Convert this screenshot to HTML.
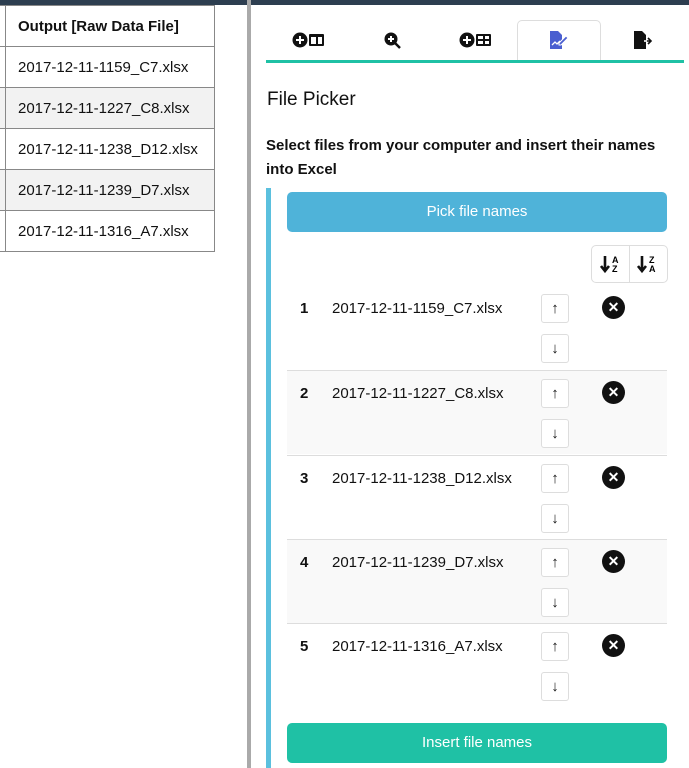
<!DOCTYPE html>
<html><head><meta charset="utf-8"><style>
*{box-sizing:border-box;margin:0;padding:0}
body{width:689px;height:768px;overflow:hidden;background:#fff;font-family:"Liberation Sans",sans-serif;color:#111;position:relative;font-size:15px}
.abs{position:absolute}
.top{left:0;top:0;width:689px;height:5px;background:#2d3e50}
.div{left:247px;top:0;width:4px;height:768px;background:#aaa}
table{position:absolute;left:-1px;top:5px;border-collapse:collapse}
td{border:1px solid #888;height:41px;padding:0 0 0 12px;width:209px;font-size:15px}
td.l{width:6px;padding:0}
tr.g td{background:#f2f2f2}
.tabline{left:266px;top:60px;width:418px;height:3px;background:#1fc1a5}
.tab{top:20px;width:84px;height:41px;border:1px solid #ddd;border-bottom:none;border-radius:5px 5px 0 0;left:517px;background:#fff}
.ic{top:30px}
.btn{left:287px;width:380px;height:40px;border-radius:5px;color:#fff;text-align:center;line-height:40px;font-size:15px}
.row{left:287px;width:380px;height:84px;border-top:1px solid #ddd}
.row .n{position:absolute;left:13px;top:14px;font-weight:bold}
.row .f{position:absolute;left:45px;top:14px}
.sb{position:absolute;left:254px;width:28px;height:29px;border:1px solid #ddd;border-radius:3px;text-align:center;line-height:27px;font-size:15px}
.x{position:absolute;left:315px;top:10px;width:23px;height:23px;border-radius:50%;background:#111;color:#fff;text-align:center;line-height:22px;font-size:14px;font-weight:bold}
</style></head><body>
<div class="abs top"></div>
<div class="abs div"></div>
<table>
<tr><td class="l"></td><td style="font-weight:bold">Output [Raw Data File]</td></tr>
<tr><td class="l"></td><td>2017-12-11-1159_C7.xlsx</td></tr>
<tr class="g"><td class="l"></td><td>2017-12-11-1227_C8.xlsx</td></tr>
<tr><td class="l"></td><td>2017-12-11-1238_D12.xlsx</td></tr>
<tr class="g"><td class="l"></td><td>2017-12-11-1239_D7.xlsx</td></tr>
<tr><td class="l"></td><td>2017-12-11-1316_A7.xlsx</td></tr>
</table>
<div class="abs tab"></div>
<div class="abs tabline"></div>
<svg class="abs ic" style="left:292px" width="34" height="20" viewBox="0 0 34 20"><circle cx="8" cy="10" r="7.5" fill="#111"/><path d="M8 6v8M4 10h8" stroke="#fff" stroke-width="2"/><rect x="17" y="4" width="15" height="12" rx="1" fill="#111"/><rect x="19" y="7" width="5" height="7" fill="#fff"/><rect x="26" y="7" width="4" height="7" fill="#fff"/></svg>
<svg class="abs ic" style="left:383px" width="20" height="20" viewBox="0 0 20 20"><circle cx="8" cy="9" r="6.5" fill="#111"/><path d="M8 6v6M5 9h6" stroke="#fff" stroke-width="2"/><path d="M12 13l5 5" stroke="#111" stroke-width="2.5"/></svg>
<svg class="abs ic" style="left:459px" width="34" height="20" viewBox="0 0 34 20"><circle cx="8" cy="10" r="7.5" fill="#111"/><path d="M8 6v8M4 10h8" stroke="#fff" stroke-width="2"/><rect x="17" y="4" width="15" height="12" rx="1" fill="#111"/><rect x="19" y="6" width="5" height="3" fill="#fff"/><rect x="26" y="6" width="4" height="3" fill="#fff"/><rect x="19" y="11" width="5" height="3" fill="#fff"/><rect x="26" y="11" width="4" height="3" fill="#fff"/></svg>
<svg class="abs ic" style="left:549px" width="20" height="20" viewBox="0 0 20 20"><path d="M1 1h8l4 4v14H1z" fill="#4a5fd0"/><path d="M3 15l3-3 2 2 3-3" stroke="#fff" stroke-width="1.3" fill="none"/><path d="M10 13l7-7 2 2-7 7h-2z" fill="#4a5fd0" stroke="#fff" stroke-width="1"/></svg>
<svg class="abs ic" style="left:633px" width="20" height="20" viewBox="0 0 20 20"><path d="M1 1h8l4 4v14H1z" fill="#111"/><path d="M11 11h7M15 8l3 3-3 3" stroke="#111" stroke-width="1.6" fill="none"/><path d="M11 11h3" stroke="#fff" stroke-width="1.6"/></svg>
<div class="abs" style="left:267px;top:89px;font-size:19px">File Picker</div>
<div class="abs" style="left:266px;top:134px;font-weight:bold;font-size:15px;line-height:24px;width:420px">Select files from your computer and insert their names into Excel</div>
<div class="abs" style="left:266px;top:188px;width:5px;height:580px;background:#5bc0de"></div>
<div class="abs btn" style="top:192px;background:#4fb3d9">Pick file names</div>
<div class="abs" style="left:591px;top:245px;width:77px;height:38px;border:1px solid #ddd;border-radius:5px"><div style="position:absolute;left:37px;top:0;width:1px;height:37px;background:#ddd"></div>
<svg style="position:absolute;left:8px;top:8px" width="22" height="20" viewBox="0 0 22 20"><path d="M5 2v14M1 12l4 5 4-5" stroke="#111" stroke-width="2.6" fill="none"/><text x="12" y="9" font-size="9" font-weight="bold" font-family="Liberation Sans">A</text><text x="12" y="18" font-size="9" font-weight="bold" font-family="Liberation Sans">Z</text></svg>
<svg style="position:absolute;left:45px;top:8px" width="22" height="20" viewBox="0 0 22 20"><path d="M5 2v14M1 12l4 5 4-5" stroke="#111" stroke-width="2.6" fill="none"/><text x="12" y="9" font-size="9" font-weight="bold" font-family="Liberation Sans">Z</text><text x="12" y="18" font-size="9" font-weight="bold" font-family="Liberation Sans">A</text></svg></div>
<div class="abs row" style="top:286px;border-top:none"><span class="n">1</span><span class="f">2017-12-11-1159_C7.xlsx</span><div class="sb" style="top:8px">↑</div><div class="sb" style="top:48px">↓</div><div class="x">✕</div></div>
<div class="abs row" style="top:370px;background:#f9f9f9"><span class="n">2</span><span class="f">2017-12-11-1227_C8.xlsx</span><div class="sb" style="top:8px;background:#fff">↑</div><div class="sb" style="top:48px;background:#fff">↓</div><div class="x">✕</div></div>
<div class="abs row" style="top:455px"><span class="n">3</span><span class="f">2017-12-11-1238_D12.xlsx</span><div class="sb" style="top:8px">↑</div><div class="sb" style="top:48px">↓</div><div class="x">✕</div></div>
<div class="abs row" style="top:539px;background:#f9f9f9"><span class="n">4</span><span class="f">2017-12-11-1239_D7.xlsx</span><div class="sb" style="top:8px;background:#fff">↑</div><div class="sb" style="top:48px;background:#fff">↓</div><div class="x">✕</div></div>
<div class="abs row" style="top:623px"><span class="n">5</span><span class="f">2017-12-11-1316_A7.xlsx</span><div class="sb" style="top:8px">↑</div><div class="sb" style="top:48px">↓</div><div class="x">✕</div></div>
<div class="abs btn" style="top:723px;background:#1fc1a5">Insert file names</div>
</body></html>
